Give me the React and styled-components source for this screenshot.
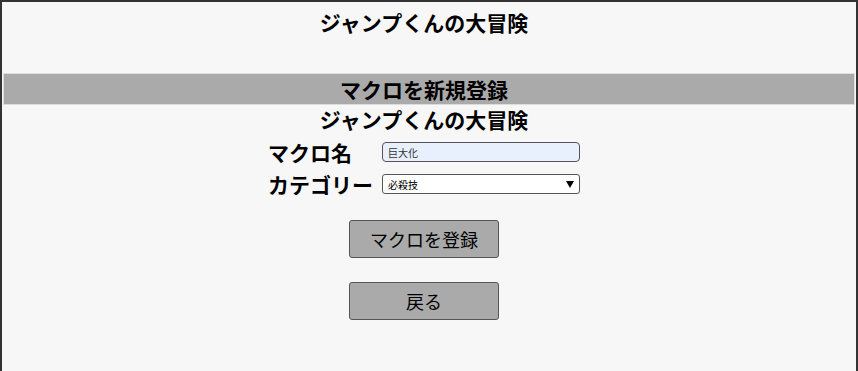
import React from 'react';
import styled, { createGlobalStyle } from 'styled-components';

const GlobalStyle = createGlobalStyle`
  html, body {
    margin: 0;
    padding: 0;
    background: #f5f5f5;
  }
  body {
    font-family: "Noto Sans CJK JP", "Noto Sans", sans-serif;
    color: #000;
  }
`;

const Frame = styled.div`
  box-sizing: border-box;
  width: 858px;
  height: 371px;
  border: 2px solid #333;
  border-bottom: none;
  background: #f7f7f7;
  padding: 0 1px;
`;

// Content is centred a little left of the page middle
const Title = styled.h1`
  margin: 0;
  font-size: 21px;
  line-height: 28px;
  font-weight: 700;
  text-align: center;
  padding-right: ${(props) => (props.$inset ? '0' : '10px')};
`;

const Header = styled.header`
  padding-top: 6px;
  height: 71px;
  box-sizing: border-box;
`;

const Bar = styled.div`
  background: #aaaaaa;
  border: 1px solid #dddddd;
  height: 30px;
  display: flex;
  align-items: center;
  justify-content: center;
  padding-right: 10px;
  font-size: 21px;
  font-weight: 700;
`;

const Form = styled.form`
  display: flex;
  flex-direction: column;
  align-items: center;
  padding-right: 10px;
`;

const Fields = styled.div`
  display: grid;
  grid-template-columns: 114px 198px;
  row-gap: 8px;
  align-items: center;
  margin-top: 7px;
`;

const Label = styled.label`
  font-size: 21px;
  font-weight: 700;
  line-height: 24px;
`;

const TextInput = styled.input`
  box-sizing: border-box;
  width: 198px;
  height: 20px;
  padding: 0 5px;
  border: 1px solid #555;
  border-radius: 4px;
  background: #e8f0fe;
  font-family: inherit;
  font-size: 10px;
  color: #333;
`;

const SelectBox = styled.div`
  box-sizing: border-box;
  width: 198px;
  height: 20px;
  padding: 0 5px;
  border: 1px solid #555;
  border-radius: 3px;
  background: #fff;
  display: flex;
  align-items: center;
  justify-content: space-between;
  font-size: 10px;
`;

const Arrow = styled.span`
  width: 0;
  height: 0;
  border-left: 4px solid transparent;
  border-right: 4px solid transparent;
  border-top: 7px solid #000;
`;

const Buttons = styled.div`
  display: flex;
  flex-direction: column;
  gap: 24px;
  margin-top: 24px;
`;

const Button = styled.button`
  box-sizing: border-box;
  width: 150px;
  height: 38px;
  background: #aaaaaa;
  border: 1px solid #555;
  border-radius: 3px;
  font-family: inherit;
  font-size: 18px;
  color: #000;
  cursor: pointer;
`;

const App = () => {
  return (
    <>
      <GlobalStyle />
      <Frame>
        <Header>
          <Title>ジャンプくんの大冒険</Title>
        </Header>
        <Bar>マクロを新規登録</Bar>
        <Form onSubmit={(e) => e.preventDefault()}>
          <Title $inset>ジャンプくんの大冒険</Title>
          <Fields>
            <Label>マクロ名</Label>
            <TextInput defaultValue="巨大化" />
            <Label>カテゴリー</Label>
            <SelectBox>
              <span>必殺技</span>
              <Arrow />
            </SelectBox>
          </Fields>
          <Buttons>
            <Button type="submit">マクロを登録</Button>
            <Button type="button">戻る</Button>
          </Buttons>
        </Form>
      </Frame>
    </>
  );
};

export default App;
